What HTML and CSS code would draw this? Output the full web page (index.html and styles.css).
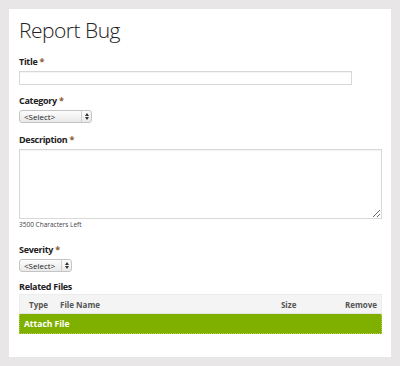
FILE: index.html
```html
<!DOCTYPE html>
<html lang="en">

<head>
  <meta charset="UTF-8">
  <meta name="viewport" content="width=device-width, initial-scale=1.0">
  <title>Report Bug</title>
  <link rel="stylesheet" href="styles.css">
</head>

<body>
  <div class="card">
    <h1 class="card__title">Report Bug</h1>

    <form class="form">
      <label class="form__label">Title <span class="form__req">*</span></label>
      <input type="text" class="form__input form__input_title">

      <label class="form__label">Category <span class="form__req">*</span></label>
      <span class="select select_category">
        <select class="select__box">
          <option>&lt;Select&gt;</option>
        </select>
        <span class="select__arrows"></span>
      </span>

      <label class="form__label">Description <span class="form__req">*</span></label>
      <textarea class="form__textarea"></textarea>
      <div class="form__hint">3500 Characters Left</div>

      <label class="form__label">Severity <span class="form__req">*</span></label>
      <span class="select select_severity">
        <select class="select__box">
          <option>&lt;Select&gt;</option>
        </select>
        <span class="select__arrows"></span>
      </span>

      <label class="form__label form__label_files">Related Files</label>
      <div class="files">
        <div class="files__head">
          <span class="files__type">Type</span>
          <span class="files__name">File Name</span>
          <span class="files__size">Size</span>
          <span class="files__remove">Remove</span>
        </div>
        <div class="files__attach">Attach File</div>
      </div>
    </form>
  </div>
</body>

</html>
```

FILE: styles.css
```css
* {
  box-sizing: border-box;
}

body {
  margin: 0;
  padding: 9px;
  background-color: #e8e6e6;
  font-family: "Open Sans", "Liberation Sans", sans-serif;
  color: #222;
}

.card {
  background-color: #fff;
  width: 382px;
  height: 348px;
  padding: 6px 9px 0 10px;
}

.card__title {
  margin: 0;
  font-size: 21px;
  font-weight: 300;
  letter-spacing: -0.5px;
  line-height: 30px;
  color: #222;
}

.form {
  display: flex;
  flex-direction: column;
  align-items: flex-start;
  margin-top: 10px;
}

.form__label {
  font-size: 9px;
  font-weight: 700;
  letter-spacing: -0.3px;
  line-height: 14px;
  color: #222;
  margin-bottom: 2px;
}

.form__req {
  color: #8b5a2b;
}

.form__input {
  display: block;
  width: 333px;
  height: 14px;
  border: 1px solid #d8d8d8;
  box-shadow: inset 0 1px 1px rgba(0, 0, 0, 0.05);
  margin: 0 0 9px;
  padding: 0;
}

.select {
  position: relative;
  display: block;
  height: 13px;
  margin: 0 0 10px;
}

.select_category {
  width: 73px;
}

.select_severity {
  width: 53px;
  margin-bottom: 8px;
}

.select__box {
  appearance: none;
  -webkit-appearance: none;
  display: block;
  width: 100%;
  height: 13px;
  margin: 0;
  padding: 0 0 0 4px;
  border: 1px solid #c4c4c4;
  border-radius: 3px;
  background: linear-gradient(#fdfdfd, #e9e9e9);
  font-family: "Open Sans", "Liberation Sans", sans-serif;
  font-size: 8px;
  line-height: 11px;
  color: #222;
}

.select__arrows {
  position: absolute;
  top: 1px;
  right: 1px;
  bottom: 1px;
  width: 10px;
  border-left: 1px solid #cfcfcf;
  pointer-events: none;
}

.select__arrows::before,
.select__arrows::after {
  content: '';
  position: absolute;
  left: 3px;
  width: 0;
  height: 0;
  border-left: 2px solid transparent;
  border-right: 2px solid transparent;
}

.select__arrows::before {
  top: 2px;
  border-bottom: 3px solid #333;
}

.select__arrows::after {
  bottom: 2px;
  border-top: 3px solid #333;
}

.form__textarea {
  display: block;
  width: 363px;
  height: 70px;
  border: 1px solid #d8d8d8;
  box-shadow: inset 0 1px 1px rgba(0, 0, 0, 0.05);
  margin: 0;
  padding: 0;
  resize: both;
}

.form__hint {
  font-size: 6.5px;
  line-height: 10px;
  color: #444;
  margin: 1px 0 13px;
}

.form__label_files {
  margin-bottom: 0;
}

.files {
  width: 363px;
  border: 1px solid #ececec;
  border-bottom: 0;
}

.files__head {
  display: flex;
  align-items: center;
  height: 19px;
  background-color: #f4f4f4;
  border-bottom: 1px solid #e4e4e4;
  font-size: 8px;
  font-weight: 700;
  color: #555;
  padding: 0 4px 0 9px;
}

.files__type {
  width: 31px;
}

.files__name {
  flex: 1 1 auto;
}

.files__size {
  width: 64px;
}

.files__attach {
  height: 20px;
  margin: 0 -1px;
  background-color: #7fb000;
  border: 1px dotted #b3d65a;
  border-top: 0;
  color: #fff;
  font-size: 8.5px;
  font-weight: 700;
  line-height: 19px;
  padding-left: 4px;
}
```
